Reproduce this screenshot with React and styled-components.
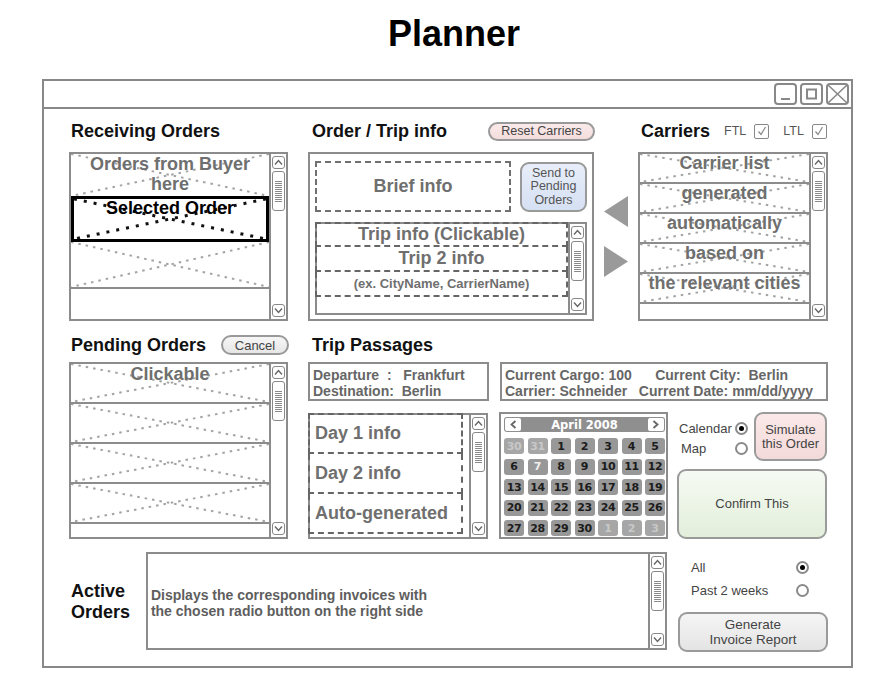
import React from 'react';
import styled, { createGlobalStyle } from 'styled-components';

const LINE = '#8c8c8c';
const SOFT = '#6f6f6f';

const GlobalStyle = createGlobalStyle`
  html, body { margin: 0; padding: 0; background: #fff; }
  body { font-family: "Liberation Sans", Arial, sans-serif; }
  * { box-sizing: border-box; }
`;

const Page = styled.div`
  width: 886px;
  height: 699px;
  overflow: hidden;
`;

const Title = styled.h1`
  margin: 14px 0 0;
  padding-left: 22px;
  height: 40px;
  text-align: center;
  font-size: 36px;
  line-height: 40px;
  font-weight: bold;
  color: #000;
`;

const Window = styled.div`
  margin: 25px 0 0 42px;
  width: 811px;
  height: 589px;
  border: 2px solid #888;
  display: flex;
  flex-direction: column;
`;

const TitleBar = styled.div`
  height: 28px;
  border-bottom: 2px solid #888;
  display: flex;
  justify-content: flex-end;
  align-items: flex-start;
  gap: 3px;
  padding: 2px 2px 0 0;
`;

const WinBtn = styled.div`
  width: 23px;
  height: 22px;
  border: 2px solid #888;
  border-radius: 4px;
  display: flex;
  align-items: center;
  justify-content: center;
  svg { display: block; }
`;

const Body = styled.div`
  flex: 1;
  display: flex;
  flex-direction: column;
  padding: 11px 23px 0 25px;
`;

const Row = styled.div`
  display: flex;
  align-items: flex-start;
  margin-top: ${p => p.$mt || 0}px;
`;

const Panel = styled.div`
  width: ${p => p.$w}px;
  margin-right: ${p => p.$mr || 0}px;
  flex-shrink: 0;
  display: flex;
  flex-direction: column;
`;

const PanelHeader = styled.div`
  height: ${p => p.$h || 22}px;
  margin-bottom: ${p => p.$mb}px;
  padding-left: ${p => p.$pl || 2}px;
  display: flex;
  align-items: center;
`;

const Heading = styled.h2`
  margin: 0;
  font-size: 18px;
  line-height: 21px;
  font-weight: bold;
  color: #111;
`;

const PillButton = styled.div`
  margin-left: auto;
  margin-right: -1px;
  width: ${p => p.$w}px;
  height: ${p => p.$h}px;
  border: 2px solid #999;
  border-radius: 11px;
  background: ${p => p.$bg};
  color: #444;
  font-size: ${p => p.$fs || 13}px;
  display: flex;
  align-items: center;
  justify-content: center;
`;

const ListBox = styled.div`
  height: ${p => p.$h}px;
  border: 2px solid ${LINE};
  display: flex;
  overflow: hidden;
`;

const Items = styled.div`
  flex: 1;
  min-width: 0;
  display: flex;
  flex-direction: column;
`;

const XRow = styled.div`
  position: relative;
  flex-shrink: 0;
  height: ${p => p.$h}px;
  border-bottom: ${p => (p.$noLine ? 'none' : `2px solid ${LINE}`)};
  text-align: center;
  font-size: 18px;
  font-weight: bold;
  color: ${SOFT};
`;

const SelectedRow = styled(XRow)`
  border: 3px solid #000;
  color: #000;
`;

const RowLabel = styled.span`
  position: relative;
  display: block;
  margin-top: ${p => p.$mt || 0}px;
  line-height: ${p => p.$lh || 20}px;
  white-space: nowrap;
`;

const CrossSvg = styled.svg`
  position: absolute;
  left: 0;
  top: 0;
  width: 100%;
  height: 100%;
  line {
    stroke: ${p => (p.$dark ? '#111' : '#a3a3a3')};
    stroke-width: ${p => (p.$dark ? 3 : 2)};
    stroke-dasharray: ${p => (p.$dark ? '3 7' : '2.5 5')};
  }
`;

const Cross = ({ dark }) => (
  <CrossSvg $dark={dark}>
    <line x1="0" y1="0" x2="100%" y2="100%" />
    <line x1="100%" y1="0" x2="0" y2="100%" />
  </CrossSvg>
);

const Track = styled.div`
  width: 17px;
  flex-shrink: 0;
  border-left: 2px solid ${LINE};
  padding: 2px 1px;
  display: flex;
  flex-direction: column;
`;

const ScrollBtn = styled.div`
  width: 13px;
  height: 13px;
  border: 1.5px solid #888;
  border-radius: 3px;
  display: flex;
  align-items: center;
  justify-content: center;
  svg { display: block; }
`;

const Thumb = styled.div`
  margin-top: 2px;
  width: 13px;
  height: 40px;
  border: 1.5px solid #888;
  border-radius: 3px;
  display: flex;
  align-items: center;
  justify-content: center;
`;

const Grip = styled.div`
  width: 7px;
  height: 21px;
  background: repeating-linear-gradient(to bottom, #8a8a8a 0 1px, transparent 1px 2px);
`;

const Spacer = styled.div`
  flex: 1;
`;

const Chevron = ({ dir }) => (
  <svg width="9" height="7" viewBox="0 0 9 7">
    <polyline
      points={dir === 'up' ? '1,5.5 4.5,1.5 8,5.5' : '1,1.5 4.5,5.5 8,1.5'}
      fill="none"
      stroke="#666"
      strokeWidth="1.4"
    />
  </svg>
);

const Scrollbar = () => (
  <Track>
    <ScrollBtn><Chevron dir="up" /></ScrollBtn>
    <Thumb><Grip /></Thumb>
    <Spacer />
    <ScrollBtn><Chevron dir="down" /></ScrollBtn>
  </Track>
);

/* Order / Trip info */
const OrderBox = styled.div`
  height: 169px;
  border: 2px solid ${LINE};
  padding: 7px 5px 4px 5px;
  display: flex;
  flex-direction: column;
`;

const BriefRow = styled.div`
  display: flex;
  gap: 9px;
  height: 51px;
`;

const Brief = styled.div`
  flex: 1;
  border: 2px dashed #707070;
  display: flex;
  align-items: center;
  justify-content: center;
  font-size: 18px;
  font-weight: bold;
  color: ${SOFT};
`;

const SendBtn = styled.div`
  width: 67px;
  height: 50px;
  margin-top: 1px;
  border: 2px solid #999;
  border-radius: 9px;
  background: linear-gradient(#e8eef9, #d5e0f3);
  color: #555;
  font-size: 12.5px;
  line-height: 13.5px;
  text-align: center;
  display: flex;
  align-items: center;
  justify-content: center;
`;

const InnerList = styled.div`
  margin-top: ${p => p.$mt || 0}px;
  height: ${p => p.$h}px;
  border: 2px solid ${LINE};
  display: flex;
`;

const DashedArea = styled.div`
  flex: 1;
  min-width: 0;
  display: flex;
  flex-direction: column;
  margin: -2px 0 0 -2px;
`;

const DashedStack = styled.div`
  width: ${p => p.$w};
  display: flex;
  flex-direction: column;
`;

const DashedRow = styled.div`
  height: ${p => p.$h}px;
  border: 2px dashed #666;
  border-top: none;
  &:first-child { border-top: 2px dashed #666; }
  display: flex;
  align-items: center;
  justify-content: ${p => (p.$left ? 'flex-start' : 'center')};
  padding-left: ${p => (p.$left ? 5 : 0)}px;
  font-size: ${p => p.$fs || 18}px;
  font-weight: bold;
  color: ${SOFT};
  white-space: nowrap;
`;

/* Arrows */
const ArrowCol = styled.div`
  width: 44px;
  flex-shrink: 0;
  padding-top: 76px;
  display: flex;
  flex-direction: column;
  align-items: center;
  gap: 19px;
  svg { display: block; }
`;

/* Carriers header */
const SmallLabel = styled.span`
  font-size: 12.5px;
  color: #555;
  margin-left: ${p => p.$ml}px;
`;

const CheckBox = styled.div`
  width: 15px;
  height: 15px;
  margin-left: 8px;
  border: 1.5px solid #888;
  border-radius: 2px;
  display: flex;
  align-items: center;
  justify-content: center;
  svg { display: block; }
`;

const Check = () => (
  <svg width="10" height="10" viewBox="0 0 10 10">
    <polyline points="1.5,5.5 4,8.5 8.5,1" fill="none" stroke="#888" strokeWidth="1.2" />
  </svg>
);

/* Trip passages */
const InfoRow = styled.div`
  display: flex;
  gap: 11px;
`;

const InfoBox = styled.div`
  width: ${p => (p.$w ? `${p.$w}px` : 'auto')};
  flex: ${p => (p.$w ? '0 0 auto' : '1')};
  height: 39px;
  border: 2px solid ${LINE};
  padding: 3px 3px 0;
  font-size: 14px;
  font-weight: bold;
  line-height: 16px;
  color: #666;
  white-space: pre;
`;

const DetailRow = styled.div`
  display: flex;
  margin-top: 12px;
`;

const DayList = styled(InnerList)`
  width: 180px;
  flex-shrink: 0;
`;

const CalBox = styled.div`
  width: 169px;
  height: 127px;
  margin: -1px 0 0 11px;
  border: 2px solid ${LINE};
  padding: 3px 1px 0 3px;
`;

const CalHeader = styled.div`
  width: 161px;
  height: 15px;
  border-radius: 3px;
  background: #8f8f8f;
  padding: 0 1px;
  display: flex;
  align-items: center;
  justify-content: space-between;
  color: #fff;
  font-family: "DejaVu Sans", Verdana, sans-serif;
  font-weight: bold;
  font-size: 11.5px;
`;

const CalNav = styled.div`
  width: 16px;
  height: 13px;
  border-radius: 2px;
  background: #fff;
  display: flex;
  align-items: center;
  justify-content: center;
  svg { display: block; }
`;

const CalGrid = styled.div`
  margin-top: 6px;
  display: grid;
  grid-template-columns: repeat(7, 20px);
  grid-auto-rows: 16px;
  column-gap: 3.5px;
  row-gap: 4.5px;
`;

const DayCell = styled.div`
  border-radius: 3px;
  background: ${p => (p.$off ? '#a6a6a6' : '#989898')};
  color: ${p => (p.$off ? '#c8c8c8' : p.$today ? '#eeeeee' : '#1c1c1c')};
  font-family: "DejaVu Sans", Verdana, sans-serif;
  font-weight: bold;
  font-size: 11px;
  letter-spacing: -0.3px;
  display: flex;
  align-items: center;
  justify-content: center;
`;

const Controls = styled.div`
  width: 150px;
  margin-left: 9px;
  margin-top: -1px;
  display: flex;
  flex-direction: column;
  gap: 8px;
`;

const ControlsTop = styled.div`
  display: flex;
  justify-content: space-between;
  height: 49px;
`;

const RadioGrid = styled.div`
  display: grid;
  grid-template-columns: ${p => p.$cols};
  grid-auto-rows: ${p => p.$row}px;
  row-gap: ${p => p.$gap}px;
  align-items: center;
  padding: ${p => p.$pad};
  font-size: 13px;
  color: #444;
`;

const RadioText = styled.span`
  padding-left: ${p => p.$pl || 0}px;
  white-space: nowrap;
`;

const Radio = styled.span`
  width: 13px;
  height: 13px;
  border: 2px solid #8a8a8a;
  border-radius: 50%;
  display: flex;
  align-items: center;
  justify-content: center;
  &::after {
    content: '';
    width: 5px;
    height: 5px;
    border-radius: 50%;
    background: ${p => (p.$on ? '#000' : 'transparent')};
  }
`;

const BigButton = styled.div`
  width: ${p => p.$w}px;
  height: ${p => p.$h}px;
  margin-left: ${p => p.$ml || 0}px;
  margin-top: ${p => p.$mt || 0}px;
  border: 2px solid #9a9a9a;
  border-radius: 9px;
  background: ${p => p.$bg};
  color: #444;
  font-size: ${p => p.$fs || 13}px;
  line-height: ${p => p.$lh || 14}px;
  text-align: center;
  display: flex;
  align-items: center;
  justify-content: center;
`;

/* Active orders */
const ActiveLabel = styled.div`
  width: 77px;
  height: 98px;
  padding: 1px 0 0 2px;
  display: flex;
  align-items: center;
  font-size: 18px;
  font-weight: bold;
  line-height: 21px;
  color: #111;
`;

const ActiveBox = styled.div`
  width: 522px;
  height: 98px;
  border: 2px solid ${LINE};
  display: flex;
`;

const ActiveText = styled.div`
  flex: 1;
  padding: 3px 0 0 3px;
  display: flex;
  align-items: center;
  font-size: 14px;
  font-weight: bold;
  line-height: 16px;
  color: #5e5e5e;
`;

const ReportPanel = styled.div`
  width: 151px;
  margin-left: 10px;
  display: flex;
  flex-direction: column;
`;

const LeftTriangle = () => (
  <svg width="24" height="31" viewBox="0 0 24 31">
    <polygon points="24,0 24,31 0,15.5" fill="#9a9a9a" />
  </svg>
);

const RightTriangle = () => (
  <svg width="24" height="31" viewBox="0 0 24 31">
    <polygon points="0,0 0,31 24,15.5" fill="#9a9a9a" />
  </svg>
);

const calRows = [
  [['30', 'off'], ['31', 'off'], '1', '2', '3', '4', '5'],
  ['6', ['7', 'today'], '8', '9', '10', '11', '12'],
  ['13', '14', '15', '16', '17', '18', '19'],
  ['20', '21', '22', '23', '24', '25', '26'],
  ['27', '28', '29', '30', ['1', 'off'], ['2', 'off'], ['3', 'off']],
];

const NavChevron = ({ dir }) => (
  <svg width="7" height="9" viewBox="0 0 7 9">
    <polyline
      points={dir === 'left' ? '5.5,1 1.5,4.5 5.5,8' : '1.5,1 5.5,4.5 1.5,8'}
      fill="none"
      stroke="#666"
      strokeWidth="1.8"
    />
  </svg>
);

export default function App() {
  return (
    <Page>
      <GlobalStyle />
      <Title>Planner</Title>
      <Window>
        <TitleBar>
          <WinBtn>
            <svg width="17" height="16" viewBox="0 0 17 16">
              <line x1="4" y1="13" x2="13" y2="13" stroke="#888" strokeWidth="2" />
            </svg>
          </WinBtn>
          <WinBtn>
            <svg width="17" height="16" viewBox="0 0 17 16">
              <rect x="4" y="3.5" width="9" height="9" fill="none" stroke="#888" strokeWidth="2" />
            </svg>
          </WinBtn>
          <WinBtn>
            <svg width="19" height="18" viewBox="0 0 19 18">
              <line x1="0" y1="0" x2="19" y2="18" stroke="#888" strokeWidth="1.5" />
              <line x1="19" y1="0" x2="0" y2="18" stroke="#888" strokeWidth="1.5" />
            </svg>
          </WinBtn>
        </TitleBar>

        <Body>
          <Row>
            <Panel $w={219} $mr={20}>
              <PanelHeader $mb={10}>
                <Heading>Receiving Orders</Heading>
              </PanelHeader>
              <ListBox $h={169}>
                <Items>
                  <XRow $h={42} $noLine>
                    <Cross />
                    <RowLabel $mt={0} $lh={20}>Orders from Buyer<br />here</RowLabel>
                  </XRow>
                  <SelectedRow $h={46}>
                    <Cross dark />
                    <RowLabel $mt={1} $lh={16}>Selected Order</RowLabel>
                  </SelectedRow>
                  <XRow $h={47}>
                    <Cross />
                  </XRow>
                </Items>
                <Scrollbar />
              </ListBox>
            </Panel>

            <Panel $w={286}>
              <PanelHeader $mb={10} $pl={4}>
                <Heading>Order / Trip info</Heading>
                <PillButton $w={107} $h={19} $fs={12.5} $bg="linear-gradient(#fbeaea, #f3dcdc)">Reset Carriers</PillButton>
              </PanelHeader>
              <OrderBox>
                <BriefRow>
                  <Brief>Brief info</Brief>
                  <SendBtn>Send to<br />Pending<br />Orders</SendBtn>
                </BriefRow>
                <InnerList $mt={10} $h={93}>
                  <DashedArea>
                    <DashedStack $w="100%">
                      <DashedRow $h={25}>Trip info (Clickable)</DashedRow>
                      <DashedRow $h={25}>Trip 2 info</DashedRow>
                      <DashedRow $h={25} $fs={13}>(ex. CityName, CarrierName)</DashedRow>
                    </DashedStack>
                  </DashedArea>
                  <Scrollbar />
                </InnerList>
              </OrderBox>
            </Panel>

            <ArrowCol>
              <LeftTriangle />
              <RightTriangle />
            </ArrowCol>

            <Panel $w={190}>
              <PanelHeader $mb={10} $pl={3}>
                <Heading>Carriers</Heading>
                <SmallLabel $ml={14}>FTL</SmallLabel>
                <CheckBox><Check /></CheckBox>
                <SmallLabel $ml={14}>LTL</SmallLabel>
                <CheckBox><Check /></CheckBox>
              </PanelHeader>
              <ListBox $h={169}>
                <Items>
                  {['Carrier list', 'generated', 'automatically', 'based on', 'the relevant cities'].map(t => (
                    <XRow key={t} $h={30}>
                      <Cross />
                      <RowLabel $mt={1} $lh={16}>{t}</RowLabel>
                    </XRow>
                  ))}
                </Items>
                <Scrollbar />
              </ListBox>
            </Panel>
          </Row>

          <Row $mt={13}>
            <Panel $w={219} $mr={20}>
              <PanelHeader $mb={6}>
                <Heading>Pending Orders</Heading>
                <PillButton $w={68} $h={20} $bg="linear-gradient(#f6f6f6, #e6e6e6)">Cancel</PillButton>
              </PanelHeader>
              <ListBox $h={177}>
                <Items>
                  <XRow $h={40}>
                    <Cross />
                    <RowLabel $mt={2} $lh={16}>Clickable</RowLabel>
                  </XRow>
                  <XRow $h={40}><Cross /></XRow>
                  <XRow $h={40}><Cross /></XRow>
                  <XRow $h={40}><Cross /></XRow>
                </Items>
                <Scrollbar />
              </ListBox>
            </Panel>

            <Panel $w={520}>
              <PanelHeader $mb={6} $pl={4}>
                <Heading>Trip Passages</Heading>
              </PanelHeader>
              <InfoRow>
                <InfoBox $w={181}>{'Departure  :   Frankfurt\nDestination:  Berlin'}</InfoBox>
                <InfoBox>{'Current Cargo: 100      Current City:  Berlin\nCarrier: Schneider   Current Date: mm/dd/yyyy'}</InfoBox>
              </InfoRow>
              <DetailRow>
                <DayList $h={126}>
                  <DashedArea>
                    <DashedStack $w="155px">
                      <DashedRow $h={41} $left>Day 1 info</DashedRow>
                      <DashedRow $h={40} $left>Day 2 info</DashedRow>
                      <DashedRow $h={40} $left>Auto-generated</DashedRow>
                    </DashedStack>
                  </DashedArea>
                  <Scrollbar />
                </DayList>

                <CalBox>
                  <CalHeader>
                    <CalNav><NavChevron dir="left" /></CalNav>
                    <span>April 2008</span>
                    <CalNav><NavChevron dir="right" /></CalNav>
                  </CalHeader>
                  <CalGrid>
                    {calRows.flat().map((d, i) => {
                      const [label, kind] = Array.isArray(d) ? d : [d, ''];
                      return (
                        <DayCell key={i} $off={kind === 'off'} $today={kind === 'today'}>
                          {label}
                        </DayCell>
                      );
                    })}
                  </CalGrid>
                </CalBox>

                <Controls>
                  <ControlsTop>
                    <RadioGrid $cols="56px 13px" $row={13} $gap={7} $pad="10px 0 0 2px">
                      <RadioText>Calendar</RadioText>
                      <Radio $on />
                      <RadioText $pl={2}>Map</RadioText>
                      <Radio />
                    </RadioGrid>
                    <BigButton $w={73} $h={49} $bg="linear-gradient(#fbe8e8, #f3dada)">
                      Simulate<br />this Order
                    </BigButton>
                  </ControlsTop>
                  <BigButton $w={150} $h={70} $bg="linear-gradient(#f6faf3, #e2efdb)">
                    Confirm This
                  </BigButton>
                </Controls>
              </DetailRow>
            </Panel>
          </Row>

          <Row $mt={13}>
            <ActiveLabel>Active<br />Orders</ActiveLabel>
            <ActiveBox>
              <ActiveText>
                Displays the corresponding invoices with<br />the chosen radio button on the right side
              </ActiveText>
              <Scrollbar />
            </ActiveBox>
            <ReportPanel>
              <RadioGrid $cols="1fr 13px" $row={23} $gap={0} $pad="4px 19px 0 14px">
                <RadioText>All</RadioText>
                <Radio $on />
                <RadioText>Past 2 weeks</RadioText>
                <Radio />
              </RadioGrid>
              <BigButton $w={150} $h={40} $ml={1} $mt={10} $fs={13.5} $lh={15} $bg="linear-gradient(#f5f5f5, #e4e4e4)">
                Generate<br />Invoice Report
              </BigButton>
            </ReportPanel>
          </Row>
        </Body>
      </Window>
    </Page>
  );
}
